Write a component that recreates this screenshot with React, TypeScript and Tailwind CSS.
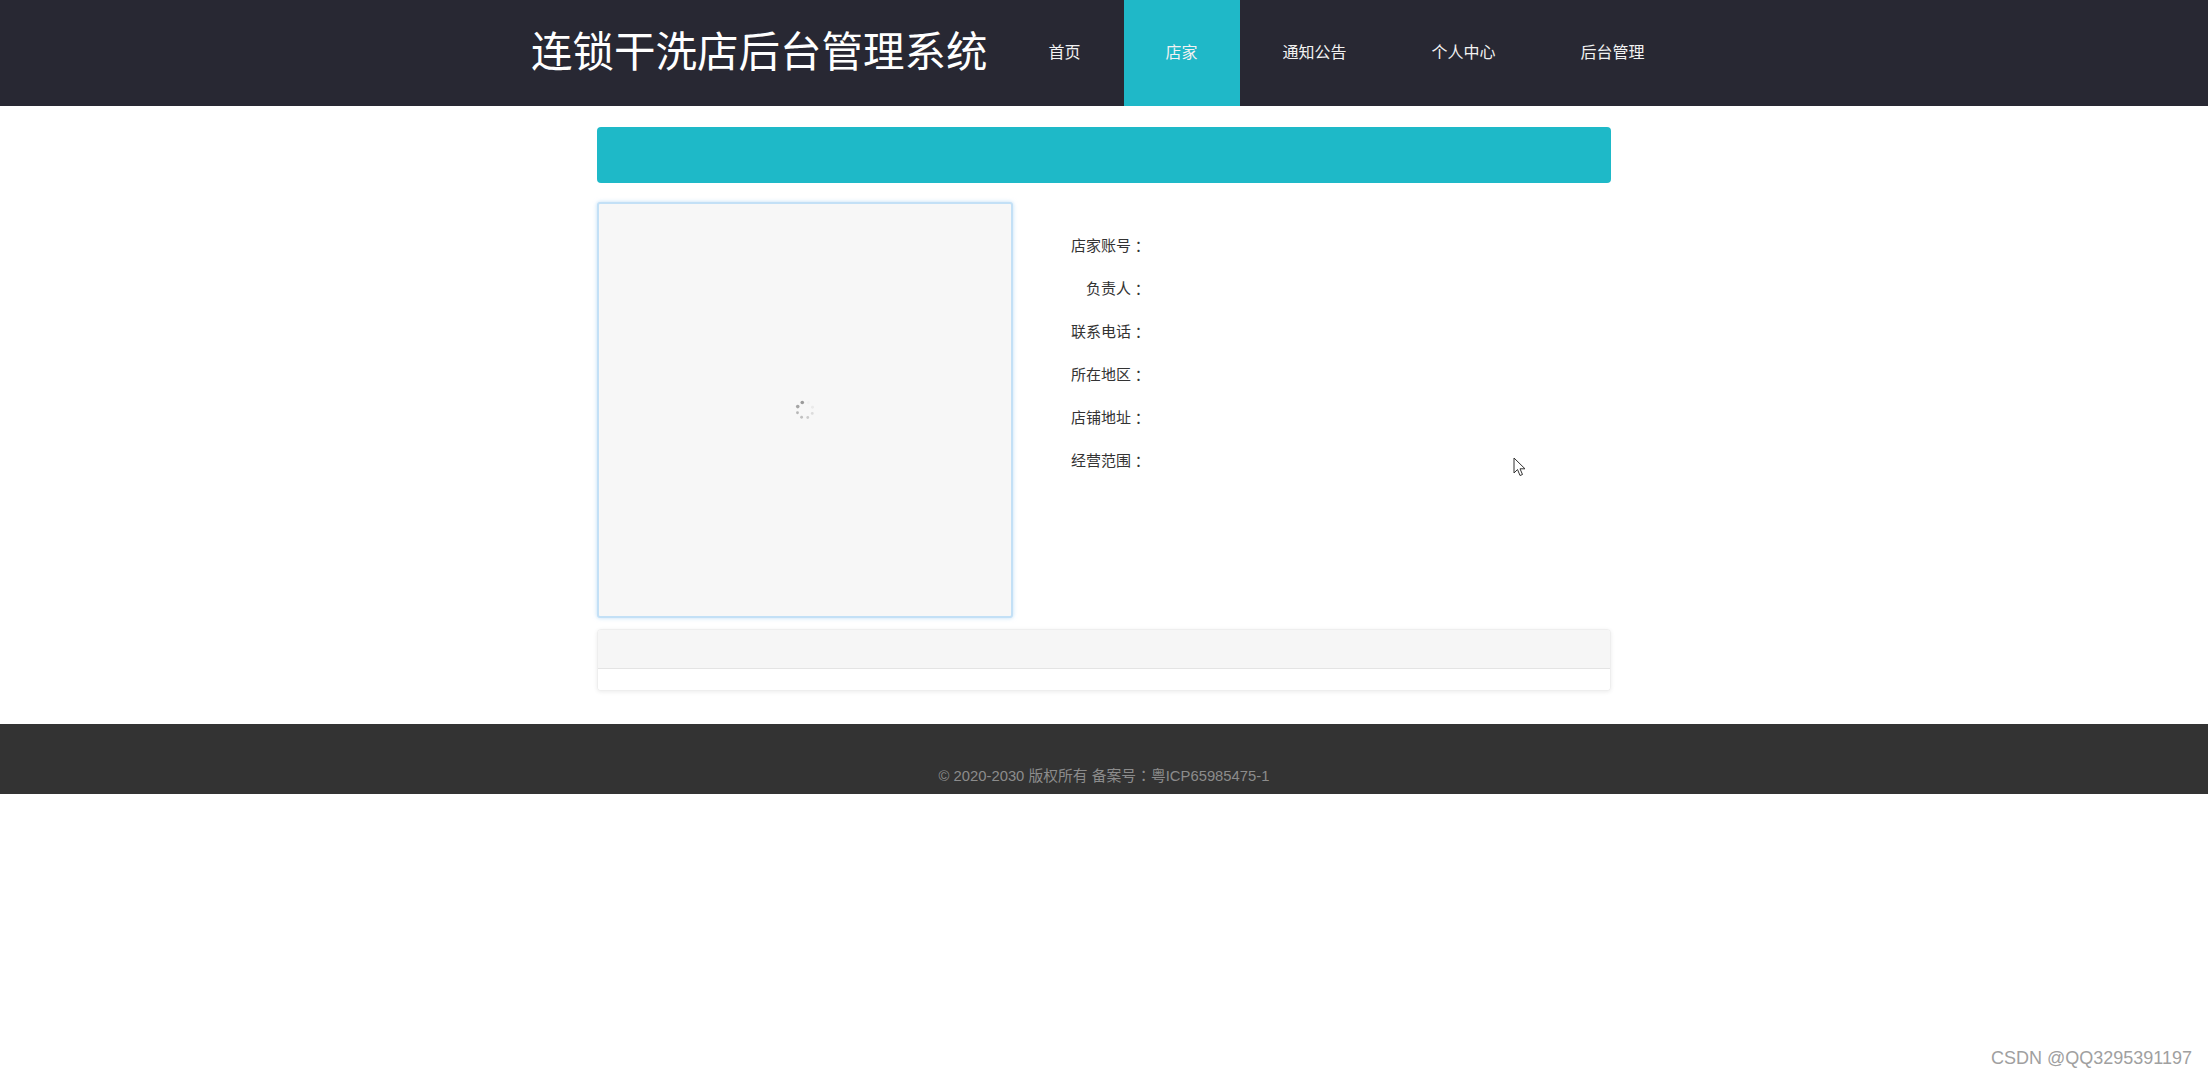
import React from "react";

const NAV = ["首页", "店家", "通知公告", "个人中心", "后台管理"];
const FIELDS = ["店家账号", "负责人", "联系电话", "所在地区", "店铺地址", "经营范围"];

const FONT = { fontFamily: '"Liberation Sans", "Noto Sans CJK SC", sans-serif' };
const COLON_FONT = { fontFamily: '"Noto Sans CJK JP", sans-serif' };

function Spinner() {
  const dots = Array.from({ length: 8 }, (_, i) => i);
  const op = [0.85, 0.75, 0.6, 0.5, 0.4, 0.25, 0.12, 0.05];
  return (
    <svg width="26" height="26" viewBox="-13 -13 26 26">
      {dots.map((i) => {
        const a = (-110 - i * 45) * (Math.PI / 180);
        return (
          <circle
            key={i}
            cx={Math.cos(a) * 8}
            cy={Math.sin(a) * 8}
            r={i < 2 ? 1.8 : 1.4}
            fill="#8a8a8a"
            opacity={op[i]}
          />
        );
      })}
    </svg>
  );
}

export default function App() {
  return (
    <div className="relative min-h-[1080px] bg-white" style={FONT}>
      {/* header */}
      <div className="h-[106px] bg-[#282833]">
        <div className="w-[1200px] mx-auto h-full flex items-center">
          <h1 className="ml-[27px] text-[41.5px] leading-none text-white font-normal whitespace-nowrap">
            连锁干洗店后台管理系统
          </h1>
          <nav className="ml-[19px] flex gap-[1px] h-full">
            {NAV.map((n) => (
              <div
                key={n}
                className={
                  "h-full flex items-center px-[42px] text-[16px] text-[#f2f2f2] whitespace-nowrap " +
                  (n === "店家" ? "bg-[#1fb8c8]" : "")
                }
              >
                {n}
              </div>
            ))}
          </nav>
        </div>
      </div>

      {/* content */}
      <div className="w-[1014px] mx-auto pt-[21px]">
        <div className="h-[56px] rounded-[4px] bg-[#1eb9c8]" />

        <div className="mt-[19px] flex">
          <div className="w-[416px] h-[416px] shrink-0 rounded-[3px] border-2 border-[#c3e0f6] bg-[#f7f7f7] shadow-[0_0_4px_rgba(150,200,240,0.6)] flex items-center justify-center">
            <Spinner />
          </div>
          <div className="ml-[28px] w-[105px] pt-[23px] flex flex-col">
            {FIELDS.map((f) => (
              <div key={f} className="h-[43px] flex items-center justify-end text-[15px] text-[#333]">
                {f}
                <span style={COLON_FONT}>：</span>
              </div>
            ))}
          </div>
        </div>

        <div className="mt-[11px] rounded-[4px] overflow-hidden border border-[#eeeeee] shadow-[0_1px_4px_rgba(0,0,0,0.08)] bg-white">
          <div className="h-[39px] bg-[#f6f6f6] border-b border-[#e4e4e4]" />
          <div className="h-[21px] bg-white" />
        </div>
      </div>

      {/* footer */}
      <div className="mt-[33px] bg-[#333333] pt-[41px] pb-[8px] text-center text-[14.8px] leading-[20px] text-[#8c8c8c]">
        © 2020-2030 版权所有 备案号<span style={COLON_FONT}>：</span>粤ICP65985475-1
      </div>

      {/* mouse cursor */}
      <svg className="absolute left-[1513px] top-[457px]" width="14" height="21" viewBox="0 0 14 21">
        <path d="M1 1 L1 16 L4.5 12.5 L7 18.5 L9.5 17.5 L7 11.8 L12 11.8 Z" fill="#fff" stroke="#333" strokeWidth="1" strokeLinejoin="round" />
      </svg>

      {/* watermark */}
      <div className="absolute right-[16px] bottom-[8px] text-[18px] text-[#a0a0a0]" style={{ fontFamily: '"Liberation Sans", Arial, sans-serif' }}>
        CSDN @QQ3295391197
      </div>
    </div>
  );
}
